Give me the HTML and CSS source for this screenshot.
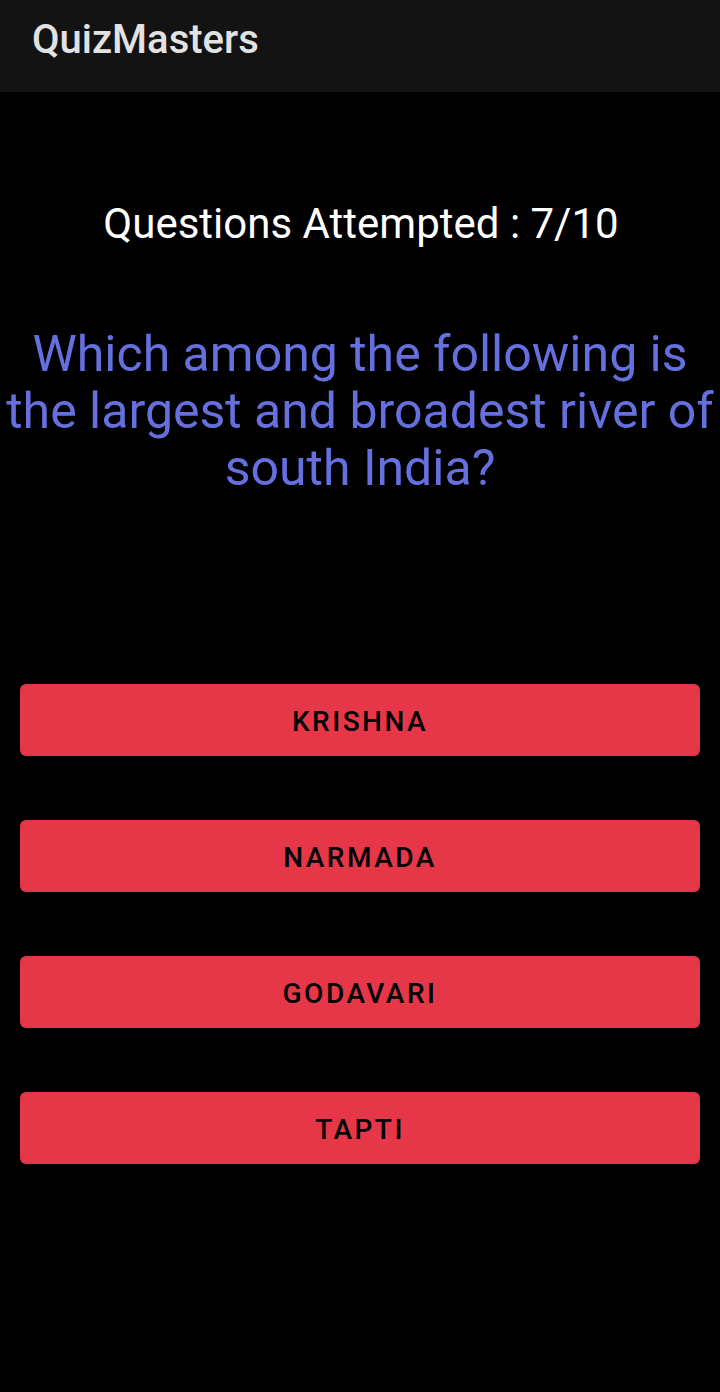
FILE: index.html
```html
<!DOCTYPE html>
<html>
<head>
<meta charset="utf-8">
<link rel="stylesheet" href="styles.css">
</head>
<body>
<header class="toolbar"><h1 class="title">QuizMasters</h1></header>
<main class="content">
  <p class="attempted">Questions Attempted : 7/10</p>
  <p class="question">Which among the following is the largest and broadest river of south India?</p>
  <div class="options">
    <button class="option">KRISHNA</button>
    <button class="option">NARMADA</button>
    <button class="option">GODAVARI</button>
    <button class="option">TAPTI</button>
  </div>
</main>
</body>
</html>
```
FILE: styles.css
```css
html, body {
  margin: 0;
  padding: 0;
  background: #000;
  font-family: Roboto, "Noto Sans", sans-serif;
}
body {
  width: 720px;
  height: 1392px;
  overflow: hidden;
}
.toolbar {
  height: 92px;
  background: #131313;
  display: flex;
  align-items: center;
  padding-left: 32px;
  box-sizing: border-box;
}
.title {
  margin: 0;
  font-size: 40px;
  font-weight: 500;
  color: #e2e2e2;
  padding-bottom: 14px;
}
.content {
  display: flex;
  flex-direction: column;
}
.attempted {
  margin: 107px 0 0;
  text-align: center;
  color: #fff;
  font-size: 42px;
  padding-left: 2px;
}
.question {
  margin: 78px 0 0;
  text-align: center;
  color: #6570de;
  font-size: 50px;
  line-height: 57px;
  padding: 0 2px;
}
.options {
  margin-top: 187px;
  padding: 0 20px;
  display: flex;
  flex-direction: column;
  gap: 64px;
}
.option {
  height: 72px;
  border: none;
  border-radius: 6px;
  background: #e63748;
  color: #000;
  font-family: Roboto, "Noto Sans", sans-serif;
  font-size: 28px;
  font-weight: 500;
  letter-spacing: 0.089em;
  padding: 2px 0 0;
}
```
